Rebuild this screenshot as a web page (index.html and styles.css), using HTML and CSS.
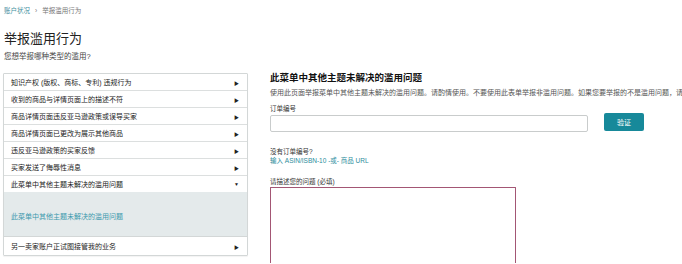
FILE: index.html
```html
<!DOCTYPE html>
<html lang="zh-CN">
<head>
<meta charset="utf-8">
<title>举报滥用行为</title>
<link rel="stylesheet" href="styles.css">
</head>
<body>
<div class="page">
  <div class="left">
    <div class="crumbs"><span class="crumb-link">账户状况</span><span class="sep">›</span><span class="crumb-cur">举报滥用行为</span></div>
    <h1 class="title">举报滥用行为</h1>
    <p class="subtitle">您想举报哪种类型的滥用?</p>
    <div class="menu">
      <div class="row"><span>知识产权 (版权、商标、专利) 违规行为</span><span class="arr">&#9654;</span></div>
      <div class="row"><span>收到的商品与详情页面上的描述不符</span><span class="arr">&#9654;</span></div>
      <div class="row"><span>商品详情页面违反亚马逊政策或误导买家</span><span class="arr">&#9654;</span></div>
      <div class="row"><span>商品详情页面已更改为展示其他商品</span><span class="arr">&#9654;</span></div>
      <div class="row"><span>违反亚马逊政策的买家反馈</span><span class="arr">&#9654;</span></div>
      <div class="row"><span>买家发送了侮辱性消息</span><span class="arr">&#9654;</span></div>
      <div class="row open"><span>此菜单中其他主题未解决的滥用问题</span><span class="arr down">&#9660;</span></div>
      <div class="panel"><span class="panel-link">此菜单中其他主题未解决的滥用问题</span></div>
      <div class="row last"><span>另一卖家账户正试图接管我的业务</span><span class="arr">&#9654;</span></div>
    </div>
  </div>
  <div class="right">
    <h2 class="heading">此菜单中其他主题未解决的滥用问题</h2>
    <p class="desc">使用此页面举报菜单中其他主题未解决的滥用问题。请酌情使用。不要使用此表单举报非滥用问题。如果您要举报的不是滥用问题，请</p>
    <label class="label">订单编号</label>
    <div class="order-row">
      <div class="input"></div>
      <button class="btn">验证</button>
    </div>
    <p class="noorder">没有订单编号?</p>
    <p class="asin">输入 ASIN/ISBN-10 -或- 商品 URL</p>
    <label class="label desc-label">请描述您的问题 (必填)</label>
    <div class="textarea"></div>
  </div>
</div>
</body>
</html>
```
FILE: styles.css
```css
* { box-sizing: border-box; }
html, body { margin: 0; padding: 0; background: #fff; overflow: hidden; }
body {
  font-family: Arial, "Liberation Sans", "Noto Sans CJK SC", sans-serif;
  color: #111;
  width: 682px;
  height: 264px;
}
.page {
  display: flex;
  gap: 22px;
  padding-left: 3px;
  height: 264px;
  overflow: hidden;
}
.left { width: 245px; flex: none; }
.right { flex: 1; min-width: 0; padding-top: 72px; }

.crumbs {
  margin-top: 7px;
  font-size: 6.5px;
  line-height: 8px;
  height: 8px;
  padding-left: 1px;
  color: #777;
}
.crumb-link { color: #3f8f9e; }
.sep { margin: 0 5px; color: #777; }

.title {
  margin: 16px 0 0 1px;
  font-size: 13px;
  line-height: 16px;
  font-weight: 400;
  color: #222;
}
.subtitle {
  margin: 5px 0 0 1px;
  font-size: 7.5px;
  line-height: 10px;
  color: #444;
}

.menu {
  margin-top: 11px;
  border: 1px solid #d3d7d7;
  border-radius: 1px;
  box-shadow: 0 1px 1px rgba(0,0,0,0.05);
}
.row {
  display: flex;
  align-items: center;
  justify-content: space-between;
  height: 17px;
  padding: 0 8px 0 7px;
  border-bottom: 1px solid #dcdfdf;
  font-size: 7px;
  color: #222;
}
.row.open { height: 16px; border-bottom: none; }
.row.last { border-bottom: none; height: 18px; }
.arr { font-size: 5px; color: #222; }
.panel {
  height: 45px;
  background: #e4eaeb;
  display: flex;
  align-items: center;
  padding: 4px 7px 0;
  border-bottom: 1px solid #d3d7d7;
  font-size: 7px;
}
.panel-link { color: #3d99ad; }

.heading {
  margin: 0;
  font-size: 9.5px;
  line-height: 12px;
  font-weight: 700;
  color: #111;
}
.desc {
  margin: 4px 0 0;
  font-size: 7px;
  line-height: 9px;
  color: #555;
  white-space: nowrap;
}
.label {
  display: block;
  margin-top: 7px;
  font-size: 6.5px;
  line-height: 9px;
  color: #333;
}
.order-row {
  display: flex;
  align-items: center;
  gap: 16px;
  margin-top: 2px;
}
.input {
  width: 318px;
  height: 17px;
  border: 1px solid #c9cccc;
  border-radius: 2px;
  background: #fff;
}
.btn {
  width: 40px;
  height: 18px;
  margin-top: -3px;
  border: none;
  border-radius: 2px;
  background: #17899a;
  color: #fff;
  font-family: inherit;
  font-size: 7px;
  padding: 0;
}
.noorder {
  margin: 15px 0 0;
  font-size: 6.5px;
  line-height: 9px;
  color: #333;
}
.asin {
  margin: 0;
  font-size: 6.5px;
  line-height: 9px;
  color: #2d8c9c;
}
.desc-label { margin-top: 12px; }
.textarea {
  margin-top: 1px;
  width: 246px;
  height: 76px;
  border: 1px solid #a35674;
  border-bottom: none;
  border-radius: 1px 1px 0 0;
}
```
